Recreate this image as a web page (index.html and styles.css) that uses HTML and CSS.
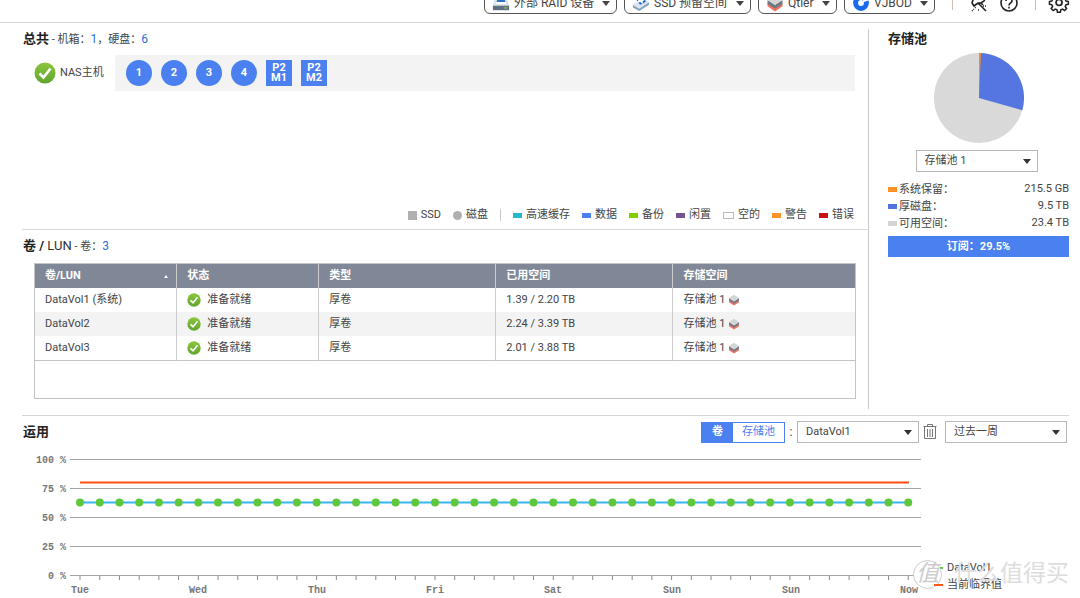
FILE: index.html
```html
<!DOCTYPE html>
<html lang="zh-CN">
<head>
<meta charset="utf-8">
<title>存储与快照总管</title>
<link rel="stylesheet" href="styles.css">
</head>
<body>
<svg class="defs" aria-hidden="true">
  <defs>
    <linearGradient id="green" x1="0" y1="0" x2="0" y2="1"><stop offset="0" stop-color="#8bc63e"/><stop offset="1" stop-color="#5fa52d"/></linearGradient>
    <symbol id="ok" viewBox="0 0 22 22"><circle cx="11" cy="11" r="10.5" fill="url(#green)"/><path d="M5.5 11.5l4 4 7-9" fill="none" stroke="#fff" stroke-width="2.6"/></symbol>
    <symbol id="tier" viewBox="0 0 12 12"><path d="M1 6l5 3.2L11 6v2.2L6 11.6 1 8.2z" fill="#f5715b"/><path d="M1 4l5 3.2L11 4v2.6L6 9.8 1 6.6z" fill="#6f7883"/><path d="M6 .8l5 3.2-5 3.4L1 4z" fill="#d5d5d5"/></symbol>
  </defs>
</svg>
<header class="toolbar">
  <button class="tool tool-raid" type="button">
    <svg class="tool-icon" viewBox="0 0 20 20"><path d="M4 2h12l3 11H1z" fill="#dce3ea"/><path d="M6 3h8l1 8H5z" fill="#3271c8"/><path d="M5 9h10l1 2H4z" fill="#fff"/><path d="M1 13h18v5H1z" fill="#5f6f82"/><path d="M13 15h4v1h-4z" fill="#9be04a"/></svg>
    <span>外部 RAID 设备</span><i class="caret"></i></button>
  <button class="tool tool-ssd" type="button">
    <svg class="tool-icon" viewBox="0 0 20 20"><path d="M1 12l7 4L19 9v3L8 19l-7-4z" fill="#8aa2bd"/><path d="M1 12l10-7 8 4-11 7z" fill="#dce5ee"/><path d="M3 4l6 8 6-3V3z" fill="#176bd8"/><path d="M9 3l2 3 4 0-3 2v3l-3-2-4 1 2-3z" fill="#fff"/></svg>
    <span>SSD 预留空间</span><i class="caret"></i></button>
  <button class="tool tool-qtier" type="button">
    <svg class="tool-icon" viewBox="0 0 12 12"><use href="#tier"/></svg>
    <span>Qtier</span><i class="caret"></i></button>
  <button class="tool tool-vjbod" type="button">
    <svg class="tool-icon" viewBox="0 0 20 20"><circle cx="10" cy="10" r="6" fill="none" stroke="#1769ee" stroke-width="5.5"/><path d="M10 10l6-8 3 5z" fill="#fff"/></svg>
    <span>VJBOD</span><i class="caret"></i></button>
  <i class="divider"></i>
  <button class="icon-button" type="button" aria-label="工具"><svg viewBox="0 0 20 20" fill="none" stroke="#222" stroke-width="1.6"><path d="M5 3L3 9l2 3 4-3 8 8M9 9l3 0 3-2 2-4M12 9l2 2"/><path d="M3 17l2-2M6 14l1-1M14 12h3M9 16h2" stroke-width="1.3" stroke-dasharray="1 1"/></svg></button>
  <button class="icon-button" type="button" aria-label="帮助"><svg viewBox="0 0 20 20" fill="none" stroke="#222" stroke-width="1.6"><circle cx="10" cy="9" r="8"/><path d="M7 7c0-4 6-4 6 0 0 2-3 2-3 4.500M10 12.700v1.800"/></svg></button>
  <i class="divider"></i>
  <button class="icon-button gear" type="button" aria-label="设置"><svg viewBox="0 0 22 22" fill="none" stroke="#222" stroke-width="1.7" stroke-linejoin="round"><path d="M9.4 1.5h3.2l.5 2.8 2 .8 2.3-1.6 2.2 2.2-1.6 2.3.8 2 2.7.5v3.1l-2.7.5-.8 2 1.6 2.3-2.2 2.2-2.3-1.6-2 .8-.5 2.7H9.400l-.5-2.7-2-.8-2.3 1.6-2.2-2.2L4 16.100l-.8-2-2.700-.5v-3.100l2.700-.5.8-2-1.600-2.300 2.200-2.200 2.300 1.600 2-.8z" transform="translate(1 0) scale(.9)"/><circle cx="11" cy="10.500" r="3"/></svg></button>
</header>

<main>
  <div class="overview">
    <div class="left">
      <section class="hardware">
        <h2 class="title"><b>总共</b> - 机箱：<a href="#">1</a>，硬盘：<a href="#">6</a></h2>
        <div class="host">
          <div class="host-name"><svg class="ok-large"><use href="#ok"/></svg>NAS主机</div>
          <div class="slots">
            <button class="disk" type="button">1</button>
            <button class="disk" type="button">2</button>
            <button class="disk" type="button">3</button>
            <button class="disk" type="button">4</button>
            <button class="m2" type="button">P2<br>M1</button>
            <button class="m2" type="button">P2<br>M2</button>
          </div>
        </div>
        <ul class="legend">
          <li><i class="sq"></i>SSD</li>
          <li><i class="dot"></i>磁盘</li>
          <li class="bar"></li>
          <li><i class="key cache"></i>高速缓存</li>
          <li><i class="key data"></i>数据</li>
          <li><i class="key spare"></i>备份</li>
          <li><i class="key idle"></i>闲置</li>
          <li><i class="key empty"></i>空的</li>
          <li><i class="key warn"></i>警告</li>
          <li><i class="key error"></i>错误</li>
        </ul>
      </section>
      <section class="volumes">
        <h2 class="title"><b>卷 / </b><span class="lun">LUN</span> - 卷：<a href="#">3</a></h2>
        <div class="table-box">
          <table>
            <colgroup><col class="c1"><col class="c1"><col class="c2"><col class="c2"><col></colgroup>
            <thead><tr><th><span class="sort">卷/LUN<i></i></span></th><th>状态</th><th>类型</th><th>已用空间</th><th>存储空间</th></tr></thead>
            <tbody>
              <tr><td>DataVol1 (系统)</td><td><span class="cell"><svg class="ok"><use href="#ok"/></svg>准备就绪</span></td><td>厚卷</td><td>1.39 / 2.20 TB</td><td><span class="cell pool">存储池 1<svg class="tier"><use href="#tier"/></svg></span></td></tr>
              <tr><td>DataVol2</td><td><span class="cell"><svg class="ok"><use href="#ok"/></svg>准备就绪</span></td><td>厚卷</td><td>2.24 / 3.39 TB</td><td><span class="cell pool">存储池 1<svg class="tier"><use href="#tier"/></svg></span></td></tr>
              <tr><td>DataVol3</td><td><span class="cell"><svg class="ok"><use href="#ok"/></svg>准备就绪</span></td><td>厚卷</td><td>2.01 / 3.88 TB</td><td><span class="cell pool">存储池 1<svg class="tier"><use href="#tier"/></svg></span></td></tr>
            </tbody>
          </table>
        </div>
      </section>
    </div>
    <aside class="pool-panel">
      <h2 class="title"><b>存储池</b></h2>
      <svg class="pie" viewBox="0 0 90 90"><circle cx="45" cy="45" r="45" fill="#d9d9d9"/><path d="M45 45V0A45 45 0 0 1 88.3 57.3z" fill="#5576e0"/><path d="M45 45V0h2z" fill="#f58a35"/></svg>
      <span class="select"><select aria-label="存储池"><option>存储池 1</option></select></span>
      <dl>
        <div><dt><i class="key warn"></i>系统保留：</dt><dd>215.5 GB</dd></div>
        <div><dt><i class="key thick"></i>厚磁盘：</dt><dd>9.5 TB</dd></div>
        <div><dt><i class="key free"></i>可用空间：</dt><dd>23.4 TB</dd></div>
      </dl>
      <div class="subscribed">订阅：29.5%</div>
    </aside>
  </div>

  <section class="usage">
    <div class="usage-head">
      <h2 class="title"><b>运用</b></h2>
      <div class="segment"><button class="on" type="button">卷</button><button type="button">存储池</button></div>
      <span class="colon">:</span>
      <span class="select"><select aria-label="卷"><option>DataVol1</option></select></span>
      <button class="trash" type="button" aria-label="删除"><svg viewBox="0 0 14 16" fill="none" stroke="#777"><path d="M.5 2.5h13M4.5 2V.5h5V2M1.5 3v11.5h11V3M4.5 5v8M7 5v8M9.5 5v8"/></svg></button>
      <span class="select"><select aria-label="时间范围"><option>过去一周</option></select></span>
    </div>
    <div class="chart-row">
      <svg class="chart" viewBox="0 0 900 148">
        <path d="M48 9.5h851M48 38.5h851M48 67.5h851M48 96.5h851M48 125.5h851" stroke="#a3a3a3"/>
        <path d="M57.5 128h830" stroke="#8a8a8a" stroke-width="4" stroke-dasharray="1 18.72"/>
        <path d="M58 32.5h829" stroke="#ff4e12" stroke-width="2"/>
        <path d="M58 52.5h829" stroke="#37b6f0" stroke-width="2"/>
        <path d="M58 52.5h829" stroke="#5fc83a" stroke-width="8" stroke-linecap="round" stroke-dasharray="0 19.72"/>
        <g class="axis" text-anchor="end">
          <text x="44" y="13">100 %</text><text x="44" y="42">75 %</text><text x="44" y="71">50 %</text><text x="44" y="100">25 %</text><text x="44" y="129">0 %</text>
        </g>
        <g class="axis" text-anchor="middle">
          <text x="58" y="143">Tue</text><text x="176" y="143">Wed</text><text x="295" y="143">Thu</text><text x="413" y="143">Fri</text><text x="531" y="143">Sat</text><text x="650" y="143">Sun</text><text x="769" y="143">Sun</text><text x="887" y="143">Now</text>
        </g>
      </svg>
      <div class="chart-keys">
        <div><i class="line green"></i>DataVol1</div>
        <div><i class="line red"></i>当前临界值</div>
        <div class="watermark"><span class="seal">值</span><span>什么值得买</span></div>
      </div>
    </div>
  </section>
</main>
</body>
</html>
```
FILE: styles.css
```css
* { box-sizing: border-box; }
body {
  margin: 0;
  font: 12px/16px Roboto, "Noto Sans CJK SC", sans-serif;
  color: #444;
  background: #fff;
  overflow: hidden;
}
button, select { font: inherit; color: inherit; }
button { padding: 0; border: 0; background: none; cursor: pointer; }
a { color: #2a70dc; text-decoration: none; }
h2, ul, dl, dd { margin: 0; padding: 0; }
.defs { position: absolute; width: 0; height: 0; }

.toolbar {
  display: flex;
  justify-content: flex-end;
  align-items: flex-end;
  height: 23px;
  padding: 0 10px 8px 0;
  border-bottom: 1px solid #d6d6d6;
  overflow: hidden;
}
.tool {
  display: flex;
  align-items: center;
  gap: 4px;
  height: 22px;
  margin: 0 7px 0 0;
  padding: 0 6px 0 7px;
  border: 1px solid #555;
  border-radius: 6px;
  white-space: nowrap;
  flex: none;
}
.tool span { flex: 1; text-align: left; font-size: 12px; }
.tool-raid { width: 133px; }
.tool-ssd { width: 127px; }
.tool-qtier { width: 79px; }
.tool-vjbod { width: 91px; }
.tool-icon { width: 18px; height: 18px; flex: none; }
.caret { border: 4px solid transparent; border-top: 5px solid #444; border-bottom: 0; }
.divider { width: 1px; height: 20px; margin: 0 16px 4px 10px; background: #c8c0b4; flex: none; }
.icon-button { width: 20px; height: 20px; margin-right: 10px; flex: none; }
.icon-button + .divider { margin: 0 12px 4px 6px; }
.icon-button svg { display: block; width: 100%; height: 100%; }
.icon-button.gear { width: 22px; height: 22px; margin: 0; }

main { padding: 6px 11px 0 22px; }
.overview { display: grid; grid-template-columns: 1fr 200px; }
.left { border-right: 1px solid #c9c9c9; }
.title { font-size: 11px; line-height: 20px; font-weight: 400; }
.title b { font-size: 13px; color: #222; }
.title .lun { font-size: 13px; color: #333; }
.title a { font-size: 12px; }
.hardware { height: 201px; border-bottom: 1px solid #d9d9d9; display: flex; flex-direction: column; }
.hardware .title, .volumes .title, .usage .title { padding-left: 1px; }
.host { display: flex; margin: 5px 13px 0 12px; }
.host-name { display: flex; align-items: center; gap: 4px; width: 81px; font-size: 11px; }
.ok-large { width: 22px; height: 22px; }
.slots { flex: 1; display: flex; align-items: center; gap: 9px; height: 36px; padding-left: 11px; background: #f3f3f3; }
.slots button { width: 26px; height: 26px; background: #4a80f0; color: #fff; font-weight: 700; font-size: 11px; line-height: 10px; }
.slots .disk { border-radius: 50%; }
.legend { display: flex; justify-content: flex-end; gap: 12px; margin: auto 14px 6px 0; list-style: none; font-size: 11px; }
.legend li { display: flex; align-items: center; gap: 4px; }
.legend .bar { width: 1px; height: 12px; margin-top: 2px; background: #c8c8c8; }
.sq, .dot { width: 9px; height: 9px; background: #b0b0b0; }
.dot { border-radius: 50%; }
.key { display: inline-block; width: 9px; height: 5px; }
.cache { background: #27b9cb; }
.data { background: #4a80f0; }
.spare { background: #7fce00; }
.idle { background: #745490; }
.legend .empty { width: 11px; height: 7px; border: 1px solid #bbb; }
.warn { background: #ff9326; }
.error { background: #c91313; }
.thick { background: #4f74e0; }
.free { background: #d4d4d4; }

.volumes { padding: 6px 0 10px; }
.table-box { height: 136px; margin: 6px 12px 0; border: 1px solid #c4c4c4; }
table { width: 100%; border-collapse: collapse; table-layout: fixed; }
.c1 { width: 17.3%; }
.c2 { width: 21.6%; }
th, td { height: 24px; padding: 0 10px; text-align: left; border-right: 1px solid #ccc; font-size: 11px; }
th { background: #808797; color: #fff; font-weight: 700; }
th:last-child, td:last-child { border-right: 0; }
tbody tr:nth-child(2) { background: #f3f3f3; }
tbody { border-bottom: 1px solid #c4c4c4; }
.sort, .cell { display: flex; align-items: center; }
.sort { justify-content: space-between; }
.sort i { border: 2px solid transparent; border-bottom: 3px solid #fff; border-top: 0; margin-right: -2px; }
.cell { gap: 6px; }
.pool { gap: 3px; }
.ok { width: 14px; height: 14px; }
.tier { width: 12px; height: 12px; }

.pool-panel { display: flex; flex-direction: column; padding-left: 19px; }
.pie { width: 90px; height: 90px; margin: 3px auto 7px; }
.select { position: relative; display: inline-block; width: 122px; }
.select select { appearance: none; display: block; width: 100%; height: 22px; padding: 0 20px 0 8px; border: 1px solid #b8b8b8; border-radius: 0; background: #fff; font-size: 11px; }
.select::after { content: ""; position: absolute; right: 7px; top: 9px; border: 4px solid transparent; border-top: 5px solid #333; border-bottom: 0; pointer-events: none; }
.pool-panel .select { align-self: center; margin-right: 4px; }
.pool-panel dl { margin-top: 9px; font-size: 11px; }
.pool-panel dl div { display: flex; justify-content: space-between; height: 17px; }
dt { display: flex; align-items: center; gap: 2px; }
.subscribed { margin-top: 4px; height: 21px; line-height: 21px; background: #4a80f0; color: #fff; font-size: 11px; font-weight: 700; text-align: center; }

.usage { margin-top: 6px; border-top: 1px solid #d6d6d6; }
.usage-head { display: flex; align-items: center; padding: 5px 2px 0 0; }
.usage-head .title { flex: 1; }
.segment { display: flex; width: 84px; height: 21px; border: 1px solid #4a80f0; font-size: 11px; }
.segment button { flex: 1; color: #4a80f0; }
.segment .on { flex: none; width: 31px; background: #4a80f0; color: #fff; font-weight: 700; }
.colon { width: 12px; text-align: center; }
.trash { width: 14px; height: 16px; margin: 0 8px 0 4px; }
.trash svg { display: block; width: 14px; height: 16px; }
.chart-row { display: flex; margin-top: 7px; }
.chart { flex: 1; min-width: 0; height: auto; }
.axis text { font: 700 10px "Liberation Mono", monospace; fill: #777; }
.chart-keys { position: relative; width: 147px; padding: 109px 0 0 12px; line-height: 17px; font-size: 11px; }
.chart-keys div { display: flex; align-items: center; gap: 4px; }
.line { width: 9px; height: 2px; }
.green { background: #5fc83a; }
.red { position: relative; z-index: 1; background: #ff5a12; }
.chart-keys .watermark { position: absolute; left: -9px; bottom: 9px; gap: 12px; font-size: 23px; line-height: 30px; color: #ddd; white-space: nowrap; }
.seal { width: 29px; height: 29px; border: 1px solid #ccc; border-radius: 50%; text-align: center; line-height: 26px; font-style: italic; color: #ccc; background: #fff; }
```
